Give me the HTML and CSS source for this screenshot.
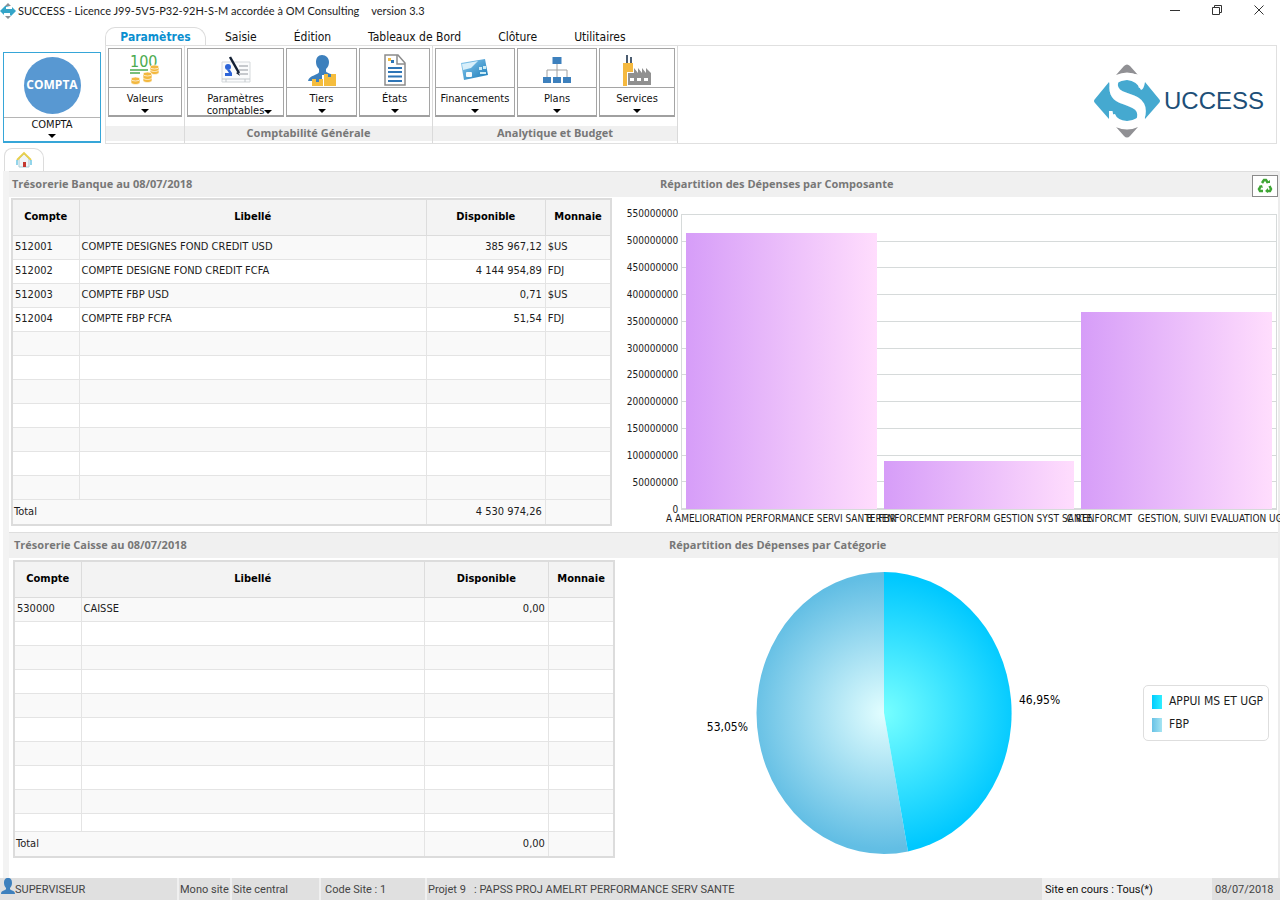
FILE: index.html
```
<!DOCTYPE html>
<html lang="fr">
<head>
    <meta charset="UTF-8">
    <meta name="viewport" content="width=device-width, initial-scale=1.0">
    <title>SUCCESS</title>
    <link rel="stylesheet" href="styles.css">
</head>
<body>
    <!-- Title bar -->
    <header class="titlebar">
        <svg class="app-icon" width="16" height="16" viewBox="0 0 16 16">
            <path d="M8 0l3 3H5zM8 16l3-3H5z" fill="#8a8f94"/>
            <path d="M4 4L0 8l4 4v-2h6v2l1 1 5-5-4-4v2H6V4l4-1H5z" fill="#35a5c8"/>
        </svg>
        <h1>SUCCESS - Licence J99-5V5-P32-92H-S-M accordée à OM Consulting</h1>
        <span class="version">version 3.3</span>
        <div class="window-controls">
            <button type="button" aria-label="Réduire"><svg width="10" height="10"><path d="M0 5.500h10"/></svg></button>
            <button type="button" aria-label="Restaurer"><svg width="10" height="10"><path d="M.5 2.500h7v7h-7zM2.500 2.500v-2h7v7h-2"/></svg></button>
            <button type="button" aria-label="Fermer"><svg width="10" height="10"><path d="M.5.5l9 9M9.500.5l-9 9"/></svg></button>
        </div>
    </header>

    <!-- Ribbon -->
    <div class="top">
        <button type="button" class="module">
            <span class="module-icon"><span class="disc">COMPTA</span></span>
            <span class="module-label">COMPTA</span>
            <span class="arrow"></span>
        </button>
        <div class="ribbon">
            <nav class="menu">
                <button type="button" class="active">Paramètres</button>
                <button type="button">Saisie</button>
                <button type="button">Édition</button>
                <button type="button">Tableaux de Bord</button>
                <button type="button">Clôture</button>
                <button type="button">Utilitaires</button>
            </nav>
            <div class="ribbon-body">
                <div class="group">
                    <div class="tools">
                        <button type="button" class="tool">
                            <span class="tool-icon">
                                <svg width="30" height="32" viewBox="0 0 30 32">
                                    <text x="0" y="13" class="hundred">100</text>
                                    <path d="M0 16h18M0 19h10" stroke="#4caa50" stroke-width="1.500"/>
                                    <g fill="#f3b83f" stroke="#fff" stroke-width=".7">
                                        <path d="M20 13v6c2 2 7 2 9 0v-6z"/><ellipse cx="24.500" cy="13" rx="4.500" ry="2"/>
                                        <path d="M20 16c2 2 7 2 9 0"/>
                                        <path d="M13 20v7c2 2 7 2 9 0v-7z"/><ellipse cx="17.500" cy="20" rx="4.500" ry="2"/>
                                        <path d="M13 24c2 2 7 2 9 0"/>
                                        <path d="M1 25v4c2 2 7 2 9 0v-4z"/><ellipse cx="5.500" cy="25" rx="4.500" ry="2"/>
                                    </g>
                                </svg>
                            </span>
                            <span class="tool-label">Valeurs</span>
                            <span class="arrow"></span>
                        </button>
                    </div>
                    <div class="caption"></div>
                </div>
                <div class="group">
                    <div class="tools">
                        <button type="button" class="tool wide">
                            <span class="tool-icon">
                                <svg width="30" height="30" viewBox="0 0 30 30">
                                    <path d="M1 7h28v20H1z" fill="#fafbfc" stroke="#d5d9dc"/>
                                    <path d="M1 24h28M5 27v-3M24 27v-3" stroke="#c3c8cc" fill="none"/>
                                    <path d="M18 11h9M18 15h9M18 19h9" stroke="#b5b9bd" stroke-width="1.500"/>
                                    <circle cx="7" cy="12" r="3" fill="#2d64d8"/>
                                    <path d="M4 21h7v-3l-2-3H6l2 3H4z" fill="#2d64d8"/>
                                    <path d="M9 2l9 16" stroke="#142034" stroke-width="2.500"/>
                                    <path d="M17 17l2 4-4-3z" fill="#142034"/>
                                </svg>
                            </span>
                            <span class="tool-label">Paramètres comptables</span>
                            <span class="arrow"></span>
                        </button>
                        <button type="button" class="tool">
                            <span class="tool-icon">
                                <svg width="30" height="32" viewBox="0 0 30 32">
                                    <path d="M15 1c-4 0-6 3-6 7 0 3 1 5 3 7v3c0 3-10 3-11 9h14v-6h10c-2-2-6-2-6-4v-2c2-2 3-4 3-7 0-4-3-7-7-7z" fill="#3d80bd"/>
                                    <path d="M5 25h11v7H5zM17 20h12v12H17z" fill="#f5bd3d"/>
                                    <path d="M9 25h3v3H9zM21 20h3v3h-3z" fill="#3d80bd"/>
                                </svg>
                            </span>
                            <span class="tool-label">Tiers</span>
                            <span class="arrow"></span>
                        </button>
                        <button type="button" class="tool">
                            <span class="tool-icon">
                                <svg width="22" height="32" viewBox="0 0 22 32">
                                    <path d="M1 1h13l7 8v22H1z" fill="#fff" stroke="#8c8c8c" stroke-width="1.500"/>
                                    <path d="M13 1v9h8" fill="none" stroke="#8c8c8c" stroke-width="1.500"/>
                                    <path d="M4 4h3v3H4z" fill="#f5bd3d"/><path d="M7 6h3v3H7z" fill="#2e75b6"/>
                                    <path d="M4 14h14M4 18h14M4 22.500h14M4 27h14" stroke="#2e75b6" stroke-width="2"/>
                                </svg>
                            </span>
                            <span class="tool-label">États</span>
                            <span class="arrow"></span>
                        </button>
                    </div>
                    <div class="caption">Comptabilité Générale</div>
                </div>
                <div class="group">
                    <div class="tools">
                        <button type="button" class="tool medium">
                            <span class="tool-icon">
                                <svg width="30" height="24" viewBox="0 0 30 24">
                                    <defs>
                                        <linearGradient id="card" x2="1" y2="1">
                                            <stop offset="0" stop-color="#8fcdf0"/><stop offset="1" stop-color="#1679b8"/>
                                        </linearGradient>
                                    </defs>
                                    <path d="M1 5L25 1l3 16-24 5z" fill="url(#card)"/>
                                    <path d="M2 6l16-3-7 7-8 2z" fill="#d8effa"/>
                                    <rect x="6" y="14" width="6" height="5" rx="1" fill="#f4fafc"/>
                                    <path d="M19 9h3v3h-3zM23 8h3v3h-3zM20 14h6v2h-6z" fill="#ccecf6"/>
                                </svg>
                            </span>
                            <span class="tool-label">Financements</span>
                            <span class="arrow"></span>
                        </button>
                        <button type="button" class="tool medium">
                            <span class="tool-icon">
                                <svg width="30" height="28" viewBox="0 0 30 28">
                                    <path d="M15 7v14M5 21v-7h20v7" fill="none" stroke="#a0a0a0"/>
                                    <path d="M10.500 1h9v7h-9zM1 21h8v6H1zM11 21h8v6h-8zM21 21h8v6h-8z" fill="#3d80bd"/>
                                </svg>
                            </span>
                            <span class="tool-label">Plans</span>
                            <span class="arrow"></span>
                        </button>
                        <button type="button" class="tool">
                            <span class="tool-icon">
                                <svg width="30" height="32" viewBox="0 0 30 32">
                                    <path d="M4 9V1h2v8zM8 9V3h2v6z" fill="#4b5c70"/>
                                    <path d="M1 9h10v9H5v14H1z" fill="#f5b940"/>
                                    <path d="M6 31V19h6v-5l4 5v-5l4 5v-5l4 5v-5l5 5v12z" fill="#909090"/>
                                    <path d="M8 24h4v3H8zM15 24h4v3h-4zM22 24h4v3h-4z" fill="#fff"/>
                                </svg>
                            </span>
                            <span class="tool-label">Services</span>
                            <span class="arrow"></span>
                        </button>
                    </div>
                    <div class="caption">Analytique et Budget</div>
                </div>
                <div class="brand">
                    <svg width="68" height="74" viewBox="0 0 68 74">
                        <path d="M23 11L31 2q3-3 6 0l8 9q-11-5-22 0zM23 63l8 9q3 3 6 0l8-9q-11 5-22 0z" fill="#909094"/>
                        <path d="M16 18L2 35q-2 2 0 4L16 55Q19 50 22 50Q24 56 34 57Q46 56 50 47Q51 50 52 55L66 39q2-2 0-4L52 18Q51 25 48 26Q44 17 34 16Q22 17 18 26Q17 22 16 18z" fill="#45a9d0"/>
                        <text x="34" y="63" text-anchor="middle" class="brand-s">S</text>
                    </svg>
                    <span>UCCESS</span>
                </div>
            </div>
        </div>
    </div>

    <div class="tabs">
        <button type="button" class="home" aria-label="Accueil">
            <svg width="16" height="16" viewBox="0 0 16 16">
                <path d="M3 7l5-5 5 5v8H3z" fill="#f1f5f7" stroke="#a9cdd8"/>
                <path d="M1 8l7-7 7 7" fill="none" stroke="#e8cf4c" stroke-width="1.800"/>
                <path d="M1 8v5M15 8v5" stroke="#70c7e5" stroke-width="1.500"/>
                <path d="M7 10h3v5H7z" fill="#c43a32"/>
            </svg>
        </button>
    </div>

    <main>
        <section class="panel">
            <div class="panel-head">
                <h2>Trésorerie Banque au 08/07/2018</h2>
                <h2 class="chart-title">Répartition des Dépenses par Composante</h2>
                <button type="button" class="refresh" aria-label="Actualiser">
                    <svg width="16" height="16" viewBox="0 0 16 16" fill="none" stroke="#3fa535" stroke-width="2.500">
                        <path d="M5 5l2-3h2l2 3M12.500 8l1.500 3-1 2H9.500M6 13H3l-1-2 2-3"/>
                        <path d="M9 5h4V2zM11 10v5l-3-2zM2 8l3-1 1 3z" fill="#3fa535" stroke="none"/>
                    </svg>
                </button>
            </div>
            <div class="panel-body">
                <table>
                    <colgroup><col class="c-account"><col><col class="c-amount"><col class="c-currency"></colgroup>
                    <thead>
                        <tr><th>Compte</th><th>Libellé</th><th>Disponible</th><th>Monnaie</th></tr>
                    </thead>
                    <tbody>
                        <tr><td>512001</td><td>COMPTE DESIGNES FOND CREDIT USD</td><td class="num">385 967,12</td><td>$US</td></tr>
                        <tr><td>512002</td><td>COMPTE DESIGNE FOND CREDIT FCFA</td><td class="num">4 144 954,89</td><td>FDJ</td></tr>
                        <tr><td>512003</td><td>COMPTE FBP USD</td><td class="num">0,71</td><td>$US</td></tr>
                        <tr><td>512004</td><td>COMPTE FBP FCFA</td><td class="num">51,54</td><td>FDJ</td></tr>
                        <tr><td></td><td></td><td></td><td></td></tr>
                        <tr><td></td><td></td><td></td><td></td></tr>
                        <tr><td></td><td></td><td></td><td></td></tr>
                        <tr><td></td><td></td><td></td><td></td></tr>
                        <tr><td></td><td></td><td></td><td></td></tr>
                        <tr><td></td><td></td><td></td><td></td></tr>
                        <tr><td></td><td></td><td></td><td></td></tr>
                    </tbody>
                    <tfoot>
                        <tr><td colspan="2">Total</td><td class="num">4 530 974,26</td><td></td></tr>
                    </tfoot>
                </table>

                <!-- Bar chart -->
                <div class="barchart">
                    <div class="y-axis">
                        <span>550000000</span><span>500000000</span><span>450000000</span><span>400000000</span>
                        <span>350000000</span><span>300000000</span><span>250000000</span><span>200000000</span>
                        <span>150000000</span><span>100000000</span><span>50000000</span><span>0</span>
                    </div>
                    <div class="plot">
                        <div class="gridlines"><i></i><i></i><i></i><i></i><i></i><i></i><i></i><i></i><i></i><i></i><i></i></div>
                        <div class="bar" style="height: 94%"></div>
                        <div class="bar" style="height: 16.5%"></div>
                        <div class="bar" style="height: 67%"></div>
                    </div>
                    <div class="x-axis">
                        <span>A AMELIORATION PERFORMANCE SERVI SANTE FBR</span>
                        <span>B RENFORCEMNT PERFORM GESTION SYST SANTE</span>
                        <span>C RENFORCMT&nbsp; GESTION, SUIVI EVALUATION UGP</span>
                    </div>
                </div>
            </div>
        </section>

        <section class="panel cash">
            <div class="panel-head">
                <h2>Trésorerie Caisse au 08/07/2018</h2>
                <h2 class="chart-title">Répartition des Dépenses par Catégorie</h2>
            </div>
            <div class="panel-body">
                <table>
                    <colgroup><col class="c-account"><col><col class="c-amount"><col class="c-currency"></colgroup>
                    <thead>
                        <tr><th>Compte</th><th>Libellé</th><th>Disponible</th><th>Monnaie</th></tr>
                    </thead>
                    <tbody>
                        <tr><td>530000</td><td>CAISSE</td><td class="num">0,00</td><td></td></tr>
                        <tr><td></td><td></td><td></td><td></td></tr>
                        <tr><td></td><td></td><td></td><td></td></tr>
                        <tr><td></td><td></td><td></td><td></td></tr>
                        <tr><td></td><td></td><td></td><td></td></tr>
                        <tr><td></td><td></td><td></td><td></td></tr>
                        <tr><td></td><td></td><td></td><td></td></tr>
                        <tr><td></td><td></td><td></td><td></td></tr>
                        <tr><td></td><td></td><td></td><td></td></tr>
                        <tr class="cut"><td></td><td></td><td></td><td></td></tr>
                    </tbody>
                    <tfoot>
                        <tr><td colspan="2">Total</td><td class="num">0,00</td><td></td></tr>
                    </tfoot>
                </table>

                <!-- Pie chart -->
                <div class="piechart">
                    <div class="pie">
                        <svg width="360" height="284" viewBox="0 0 360 284">
                            <defs>
                                <radialGradient id="ugp" gradientUnits="userSpaceOnUse" cx="180" cy="142" r="136">
                                    <stop offset="0" stop-color="#76ffff"/><stop offset="1" stop-color="#00c8ff"/>
                                </radialGradient>
                                <radialGradient id="fbp" gradientUnits="userSpaceOnUse" cx="180" cy="142" r="136">
                                    <stop offset="0" stop-color="#e2feff"/><stop offset="1" stop-color="#62bee4"/>
                                </radialGradient>
                            </defs>
                            <path d="M180 142V1A127.500 141 0 0 0 180 283A127.500 141 0 0 0 204 280.500z" fill="url(#fbp)"/>
                            <path d="M180 142V1A127.500 141 0 0 1 204 280.500z" fill="url(#ugp)"/>
                            <text x="44" y="160" text-anchor="end">53,05%</text>
                            <text x="315" y="133">46,95%</text>
                        </svg>
                    </div>
                    <ul class="legend">
                        <li class="ugp">APPUI MS ET UGP</li>
                        <li class="fbp">FBP</li>
                    </ul>
                </div>
            </div>
        </section>
    </main>

    <footer class="statusbar">
        <div class="st-user">
            <svg width="14" height="16" viewBox="0 0 14 16"><path d="M7 0C4 0 3 2 3 5c0 2 1 4 2 5v1c-1 2-5 1-5 5h14c0-4-4-3-5-5v-1c1-1 2-3 2-5 0-3-1-5-4-5z" fill="#3d80bd"/></svg>
            SUPERVISEUR
        </div>
        <div class="st-mode">Mono site</div>
        <div class="st-site">Site central</div>
        <div class="st-code">Code Site : 1</div>
        <div class="st-project">Projet 9 &nbsp; : PAPSS PROJ AMELRT PERFORMANCE SERV SANTE</div>
        <div class="st-current">Site en cours : Tous(*)</div>
        <div class="st-date">08/07/2018</div>
    </footer>
</body>
</html>
```
FILE: styles.css
```
* {
    box-sizing: border-box;
}
body {
    margin: 0;
    min-height: 100vh;
    display: flex;
    flex-direction: column;
    background-color: #fff;
    color: #1c1c1c;
    font-family: 'DejaVu Sans Condensed', Tahoma, 'Noto Sans', sans-serif;
    font-size: 11px;
    line-height: 14px;
    overflow-x: hidden;
}
h1, h2 {
    margin: 0;
}
button {
    background-color: #fff;
    border: none;
    padding: 0;
    color: #111;
    font: inherit;
    cursor: pointer;
}
svg {
    overflow: visible;
}

/* Title bar */
.titlebar {
    display: flex;
    align-items: center;
    height: 22px;
    font-family: Lato, 'Noto Sans', sans-serif;
    font-size: 11px;
}
.titlebar h1 {
    font-size: 11px;
    font-weight: normal;
    margin-left: 2px;
}
.version {
    margin-left: 12px;
}
.window-controls {
    display: flex;
    margin-left: auto;
}
.window-controls button {
    width: 42px;
    height: 20px;
}
.window-controls svg {
    fill: none;
    stroke: #333;
}

/* Ribbon */
.top {
    display: flex;
    align-items: flex-end;
    gap: 4px;
    height: 122px;
    padding: 0 3px;
}
.module {
    display: flex;
    flex-direction: column;
    align-items: center;
    width: 98px;
    height: 91px;
    margin-bottom: 1px;
    border: 1px solid #36a6d8;
    border-bottom-width: 2px;
    flex: none;
}
.module-icon {
    display: flex;
    align-items: center;
    justify-content: center;
    width: 100%;
    height: 65px;
    border-bottom: 1px solid #b5b5b5;
    flex: none;
}
.disc {
    width: 57px;
    height: 57px;
    border-radius: 50%;
    background-color: #5898d2;
    color: #fff;
    font-family: 'Open Sans', sans-serif;
    font-size: 12px;
    font-weight: bold;
    line-height: 56px;
}
.arrow {
    border: 4px solid transparent;
    border-top-color: #000;
    border-bottom: none;
}
.module .arrow {
    margin-top: 2px;
}
.ribbon {
    flex: 1;
    min-width: 0;
}
.menu {
    display: flex;
    gap: 1px;
    height: 18px;
}
.menu button {
    padding: 2px 18px 0;
    font-size: 12px;
}
.menu .active {
    width: 101px;
    padding: 0;
    border: 1px solid #dcdcdc;
    border-bottom: none;
    border-radius: 10px 12px 0 0;
    color: #0a8fd0;
    font-weight: bold;
}
.ribbon-body {
    display: flex;
    height: 99px;
    border: 1px solid #e0e0e0;
}
.group {
    display: flex;
    flex-direction: column;
    border-right: 1px solid #dadada;
}
.tools {
    display: flex;
    gap: 2px;
    padding: 2px 2px 0;
}
.group:last-of-type .tools {
    padding-left: 3px;
}
.tool {
    display: flex;
    flex-direction: column;
    align-items: center;
    position: relative;
    width: 71px;
    height: 69px;
    border: 1px solid #a5a5a5;
    border-bottom: 2px solid #a0a0a0;
}
.group:first-child .tool {
    width: 74px;
}
.tool.wide {
    width: 97px;
}
.tool.medium {
    width: 80px;
}
.tool.medium ~ .tool:not(.medium) {
    width: 76px;
}
.tool-icon {
    display: flex;
    align-items: center;
    justify-content: center;
    width: 100%;
    height: 39px;
    padding-top: 4px;
    border-bottom: 1px solid #a5a5a5;
    flex: none;
}
.tool-label {
    margin: 5px 0 4px;
    line-height: 12px;
}
.wide .tool-label {
    width: 64px;
    margin-bottom: 0;
}
.wide .arrow {
    position: absolute;
    right: 11px;
    bottom: 1px;
}
.hundred {
    font-size: 16px;
    fill: #4caa50;
}
.caption {
    height: 15px;
    margin-top: 9px;
    background-color: #f0f0f0;
    color: #777;
    font-family: 'Open Sans', 'Noto Sans', sans-serif;
    font-weight: bold;
    text-align: center;
}
.brand {
    display: flex;
    align-items: center;
    margin-left: auto;
    padding: 12px 12px 0 0;
    color: #1d4f78;
    font-family: 'Liberation Sans', Arial, sans-serif;
    font-size: 24px;
    gap: 3px;
}
.brand-s {
    font-family: 'Liberation Serif', serif;
    font-size: 80px;
    font-weight: bold;
    fill: #fff;
}

.tabs {
    height: 27px;
    padding: 4px 4px 0;
}
.home {
    width: 40px;
    height: 23px;
    border: 1px solid #dcdcdc;
    border-bottom: none;
    border-radius: 8px 10px 0 0;
}
.home svg {
    display: block;
    margin: 0 auto;
}

/* Panels */
main {
    flex: 1;
    margin-left: 3px;
    border-left: 6px solid #f3f3f3;
    border-right: 2px solid #ececec;
}
.panel-head {
    display: grid;
    grid-template-columns: 12fr 13fr;
    position: relative;
    height: 26px;
    border-top: 1px solid #dedede;
    background-color: #f0f0f0;
}
.panel-head h2 {
    padding-left: 3px;
    color: #777;
    font-family: 'Open Sans', 'Noto Sans', sans-serif;
    font-size: 11px;
    line-height: 24px;
}
.panel-head .chart-title {
    padding-left: 42px;
}
.refresh {
    position: absolute;
    right: 0;
    top: 3px;
    width: 26px;
    height: 22px;
    border: 1px solid #8a8a8a;
}
.refresh svg {
    display: block;
    margin: auto;
}
.panel-body {
    display: grid;
    grid-template-columns: 10fr 11fr;
    align-items: start;
    padding: 1px 0 6px 2px;
}
.cash .panel-head h2 {
    padding-left: 5px;
}
.cash .panel-head .chart-title {
    padding-left: 51px;
}
.cash .panel-body {
    padding: 2px 0 0 4px;
}

table {
    width: 100%;
    table-layout: fixed;
    border-collapse: collapse;
    border: 2px solid #dcdcdc;
}
.panel:not(.cash) table {
    width: calc(100% - 2px);
}
.c-account {
    width: 67px;
}
.c-amount {
    width: 119px;
}
.c-currency {
    width: 66px;
}
.cash .c-amount {
    width: 124px;
}
th {
    height: 36px;
    padding: 0;
    border: 1px solid #dcdcdc;
    background-color: #f3f3f3;
    color: #000;
}
td {
    height: 24px;
    padding: 0 3px 0 2px;
    border: 1px solid #e4e4e4;
    line-height: 14px;
    white-space: nowrap;
}
tbody tr:nth-child(odd) td, tfoot td {
    background-color: #f9f9f9;
}
tbody .cut td {
    height: 18px;
    background-color: #fff;
}
tfoot td {
    height: 26px;
}
tfoot td:first-child {
    padding-left: 1px;
}
.num {
    text-align: right;
}

/* Bar chart */
.barchart {
    display: grid;
    grid-template-columns: 67px 1fr;
    padding: 10px 1px 0 0;
}
.y-axis {
    display: flex;
    flex-direction: column;
    justify-content: space-between;
    height: 308px;
    padding-right: 3px;
    font-size: 10px;
    line-height: 12px;
    text-align: right;
}
.plot {
    display: grid;
    grid-template-columns: repeat(3, 1fr);
    align-items: end;
    gap: 7px;
    position: relative;
    height: 296px;
    margin-top: 6px;
    padding: 0 4px;
    border: 1px solid #d6dada;
}
.gridlines {
    position: absolute;
    inset: 0;
    display: flex;
    flex-direction: column;
}
.gridlines i {
    flex: 1;
    border-bottom: 1px solid #d6dada;
}
.bar {
    position: relative;
    background: linear-gradient(to right, #d69df8, #ffddfd);
}
.x-axis {
    grid-column: 2;
    display: grid;
    grid-template-columns: repeat(3, minmax(0, 1fr));
    padding: 0 4px;
    gap: 7px;
    margin-top: -3px;
    font-size: 10px;
    line-height: 12px;
}
.x-axis span {
    display: flex;
    justify-content: center;
    white-space: nowrap;
}

/* Pie chart */
.piechart {
    display: flex;
    align-items: center;
    padding: 11px 9px 0 10px;
}
.pie {
    flex: 1;
    text-align: center;
    font-size: 12px;
}
.pie svg {
    display: block;
    margin: auto;
}
.legend {
    width: 126px;
    margin: 0;
    padding: 4px 5px 4px 8px;
    border: 1px solid #dedede;
    border-radius: 5px;
    list-style: none;
    font-size: 12px;
    line-height: 23px;
}
.legend li {
    display: flex;
    align-items: center;
    gap: 7px;
    white-space: nowrap;
}
.legend li::before {
    content: '';
    width: 10px;
    height: 14px;
    flex: none;
    background: linear-gradient(to right, #00ccff, #30eeff);
}
.legend .fbp::before {
    background: linear-gradient(to right, #68c2e6, #a5e4f2);
}

/* Status bar */
.statusbar {
    display: flex;
    height: 22px;
    background-color: #e0e0e0;
    color: #444;
    font-family: Roboto, Arial, sans-serif;
    line-height: 23px;
    white-space: nowrap;
}
.statusbar div {
    padding-left: 1px;
    border-right: 2px solid #f0f0f0;
}
.statusbar .st-user {
    display: flex;
    width: 179px;
}
.st-mode {
    width: 53px;
}
.st-site {
    width: 89px;
}
.statusbar .st-code {
    width: 106px;
    padding-left: 4px;
}
.st-project {
    flex: 1;
}
.st-current {
    width: 168px;
    background-color: #f0f0f0;
    color: #111;
}
.statusbar .st-date {
    width: 68px;
    padding-left: 3px;
    border: none;
}
```
